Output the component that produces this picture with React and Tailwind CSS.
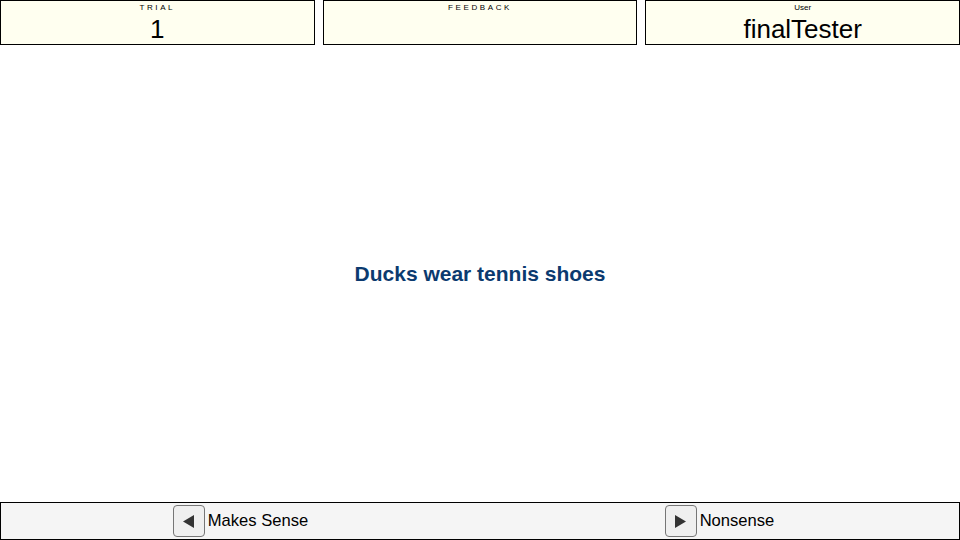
const font = { fontFamily: '"Liberation Sans", Arial, sans-serif' };

function InfoBox({ label, value, spaced }) {
  return (
    <div className="flex-1 h-[45px] border border-black bg-[#fffff0] flex flex-col items-center">
      <div className={`text-[8px] leading-[10px] mt-[2px] text-black ${spaced ? "tracking-[2.6px]" : ""}`}>{label}</div>
      <div className="text-[26px] leading-[30px] mt-[1px] text-black">{value}</div>
    </div>
  );
}

function Triangle({ dir }) {
  return (
    <svg width="13" height="15" viewBox="0 0 13 15">
      {dir === "left" ? (
        <polygon points="12,1 12,14 1,7.5" fill="#333" />
      ) : (
        <polygon points="1,1 1,14 12,7.5" fill="#333" />
      )}
    </svg>
  );
}

function Choice({ dir, label }) {
  return (
    <div className="flex-1 flex justify-center">
      <div className="flex items-center gap-[3px]">
        <button className="w-[32px] h-[32px] rounded-[4px] border border-[#767676] bg-[#efefef] flex items-center justify-center">
          <Triangle dir={dir} />
        </button>
        <span className="text-[16.6px] text-black">{label}</span>
      </div>
    </div>
  );
}

export default function App() {
  return (
    <div className="w-[960px] h-[540px] bg-white flex flex-col" style={font}>
      <div className="flex gap-2">
        <InfoBox label="TRIAL" value="1" spaced />
        <InfoBox label="FEEDBACK" value="" spaced />
        <InfoBox label="User" value="finalTester" />
      </div>
      <div className="flex-1 flex items-center justify-center">
        <p className="text-[21px] font-bold text-[#0b3a6f]">Ducks wear tennis shoes</p>
      </div>
      <div className="h-[38px] border border-black bg-[#f5f5f5] flex items-center">
        <Choice dir="left" label="Makes Sense" />
        <Choice dir="right" label="Nonsense" />
      </div>
    </div>
  );
}
